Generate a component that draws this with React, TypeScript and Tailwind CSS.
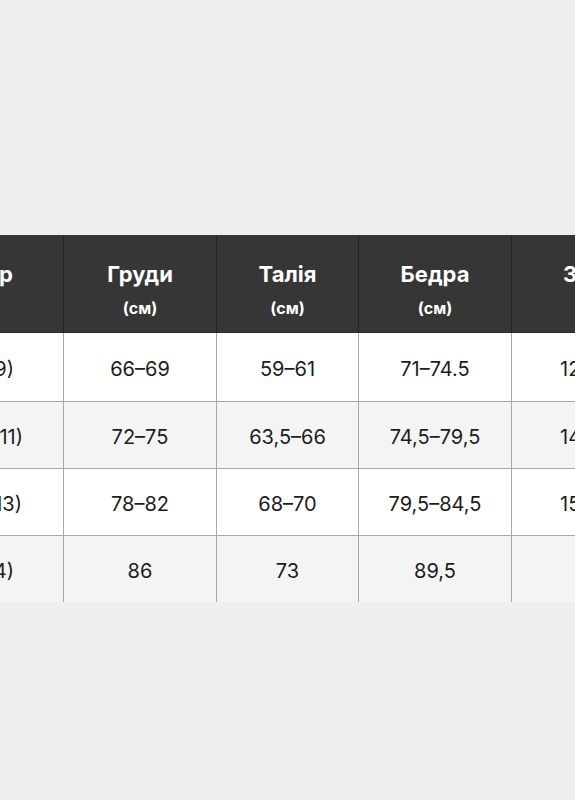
import React from "react";

const rows = [
  { a: "(7-9)", aPad: "pr-[49px]", b: "66–69", c: "59–61", d: "71–74.5", e: "128", bg: "bg-white" },
  { a: "(9-11)", aPad: "pr-[40px]", b: "72–75", c: "63,5–66", d: "74,5–79,5", e: "140", bg: "bg-[#f4f4f4]" },
  { a: "(11-13)", aPad: "pr-[41px]", b: "78–82", c: "68–70", d: "79,5–84,5", e: "152", bg: "bg-white" },
  { a: "(14)", aPad: "pr-[49px]", b: "86", c: "73", d: "89,5", e: "", bg: "bg-[#f4f4f4]" },
];

export default function App() {
  return (
    <div
      className="w-[575px] h-[800px] overflow-hidden bg-[#efefef] pt-[235px]"
      style={{ fontFamily: "Inter, Roboto, 'Liberation Sans', sans-serif" }}
    >
      <div className="bg-[#ececec]">
        <div className="grid grid-cols-[64px_153px_142px_153px_1fr] h-[98px] bg-[#363636] text-white border-b border-[#2a2a2a]">
          <div className="flex items-start justify-end pr-[50px] pt-[26px] border-r border-[#242424] text-[22px] font-bold leading-[26px] whitespace-nowrap overflow-hidden">
            Розмір
          </div>
          {["Груди", "Талія", "Бедра"].map((h) => (
            <div key={h} className="flex flex-col items-center pt-[26px] border-r border-[#242424]">
              <div className="text-[22px] font-bold leading-[26px]">{h}</div>
              <div className="text-[16px] font-bold leading-[20px] mt-[11px]">(см)</div>
            </div>
          ))}
          <div className="flex items-start justify-start pl-[51px] pt-[26px] text-[22px] font-bold leading-[26px] whitespace-nowrap overflow-hidden">
            Зріст
          </div>
        </div>
        {rows.map((r, i) => (
          <div
            key={i}
            className={`grid grid-cols-[64px_153px_142px_153px_1fr] ${r.bg} text-[#1c1c1c] text-[20px] ${
              i === 0 ? "h-[69px]" : i === 3 ? "h-[66px]" : "h-[67px]"
            } ${i < 3 ? "border-b border-[#a9a9a9]" : ""}`}
          >
            <div className={`flex items-center justify-end pt-[3px] ${r.aPad} border-r border-[#a9a9a9] whitespace-nowrap overflow-hidden`}>
              {r.a}
            </div>
            <div className="flex items-center justify-center pt-[3px] border-r border-[#a9a9a9]">{r.b}</div>
            <div className="flex items-center justify-center pt-[3px] border-r border-[#a9a9a9]">{r.c}</div>
            <div className="flex items-center justify-center pt-[3px] border-r border-[#a9a9a9]">{r.d}</div>
            <div className="flex items-center justify-start pt-[3px] pl-[48px] whitespace-nowrap overflow-hidden">{r.e}</div>
          </div>
        ))}
      </div>
    </div>
  );
}
